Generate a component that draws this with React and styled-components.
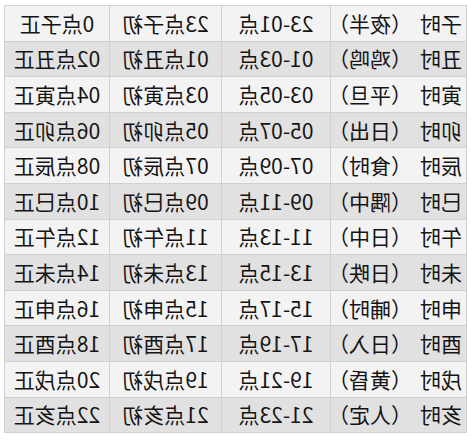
import React from 'react'
import styled, { createGlobalStyle } from 'styled-components'

const GlobalStyle = createGlobalStyle`
  html, body { margin: 0; padding: 0; background: #ffffff; }
  body { font-family: "Noto Sans CJK SC", "Noto Sans", sans-serif; }
`

const rows = [
  ['子时', '夜半', '23-01点', '23点子初', '0点子正'],
  ['丑时', '鸡鸣', '01-03点', '01点丑初', '02点丑正'],
  ['寅时', '平旦', '03-05点', '03点寅初', '04点寅正'],
  ['卯时', '日出', '05-07点', '05点卯初', '06点卯正'],
  ['辰时', '食时', '07-09点', '07点辰初', '08点辰正'],
  ['巳时', '隅中', '09-11点', '09点巳初', '10点巳正'],
  ['午时', '日中', '11-13点', '11点午初', '12点午正'],
  ['未时', '日昳', '13-15点', '13点未初', '14点未正'],
  ['申时', '晡时', '15-17点', '15点申初', '16点申正'],
  ['酉时', '日入', '17-19点', '17点酉初', '18点酉正'],
  ['戌时', '黄昏', '19-21点', '19点戌初', '20点戌正'],
  ['亥时', '人定', '21-23点', '21点亥初', '22点亥正'],
]

function App() {
  return (
    <Page>
      <GlobalStyle />
      <Mirror>
        <Table>
          <colgroup>
            <col style={{ width: 136 }} />
            <col style={{ width: 109 }} />
            <col style={{ width: 112 }} />
            <col style={{ width: 105 }} />
          </colgroup>
          <tbody>
            {rows.map((r, i) => (
              <Row key={r[0]} $even={i % 2 === 1}>
                <NameCell>
                  <Hour>{r[0]}</Hour>（{r[1]}）
                </NameCell>
                <Cell>{r[2]}</Cell>
                <Cell>{r[3]}</Cell>
                <Cell>{r[4]}</Cell>
              </Row>
            ))}
          </tbody>
        </Table>
      </Mirror>
    </Page>
  )
}

export default App

const Page = styled.div`
  width: 474px;
  height: 446px;
  padding: 5px 0 0 5px;
  box-sizing: border-box;
`
const Mirror = styled.div`
  width: 462px;
  transform: scaleX(-1);
`
const Table = styled.table`
  width: 462px;
  border-collapse: collapse;
  table-layout: fixed;
  border: 1px solid #d4d4d4;
`
const Row = styled.tr`
  height: 35.6px;
  background: ${p => (p.$even ? '#e1e1e1' : '#f3f3f3')};
`
const Cell = styled.td`
  padding: 0;
  border: 1px solid #d0d0d0;
  text-align: center;
  font-size: 21px;
  color: #141414;
  line-height: 1;
  white-space: nowrap;
`
const NameCell = styled(Cell)`
  text-align: left;
  padding-left: 4px;
`
const Hour = styled.span`
  margin-right: 8px;
`
